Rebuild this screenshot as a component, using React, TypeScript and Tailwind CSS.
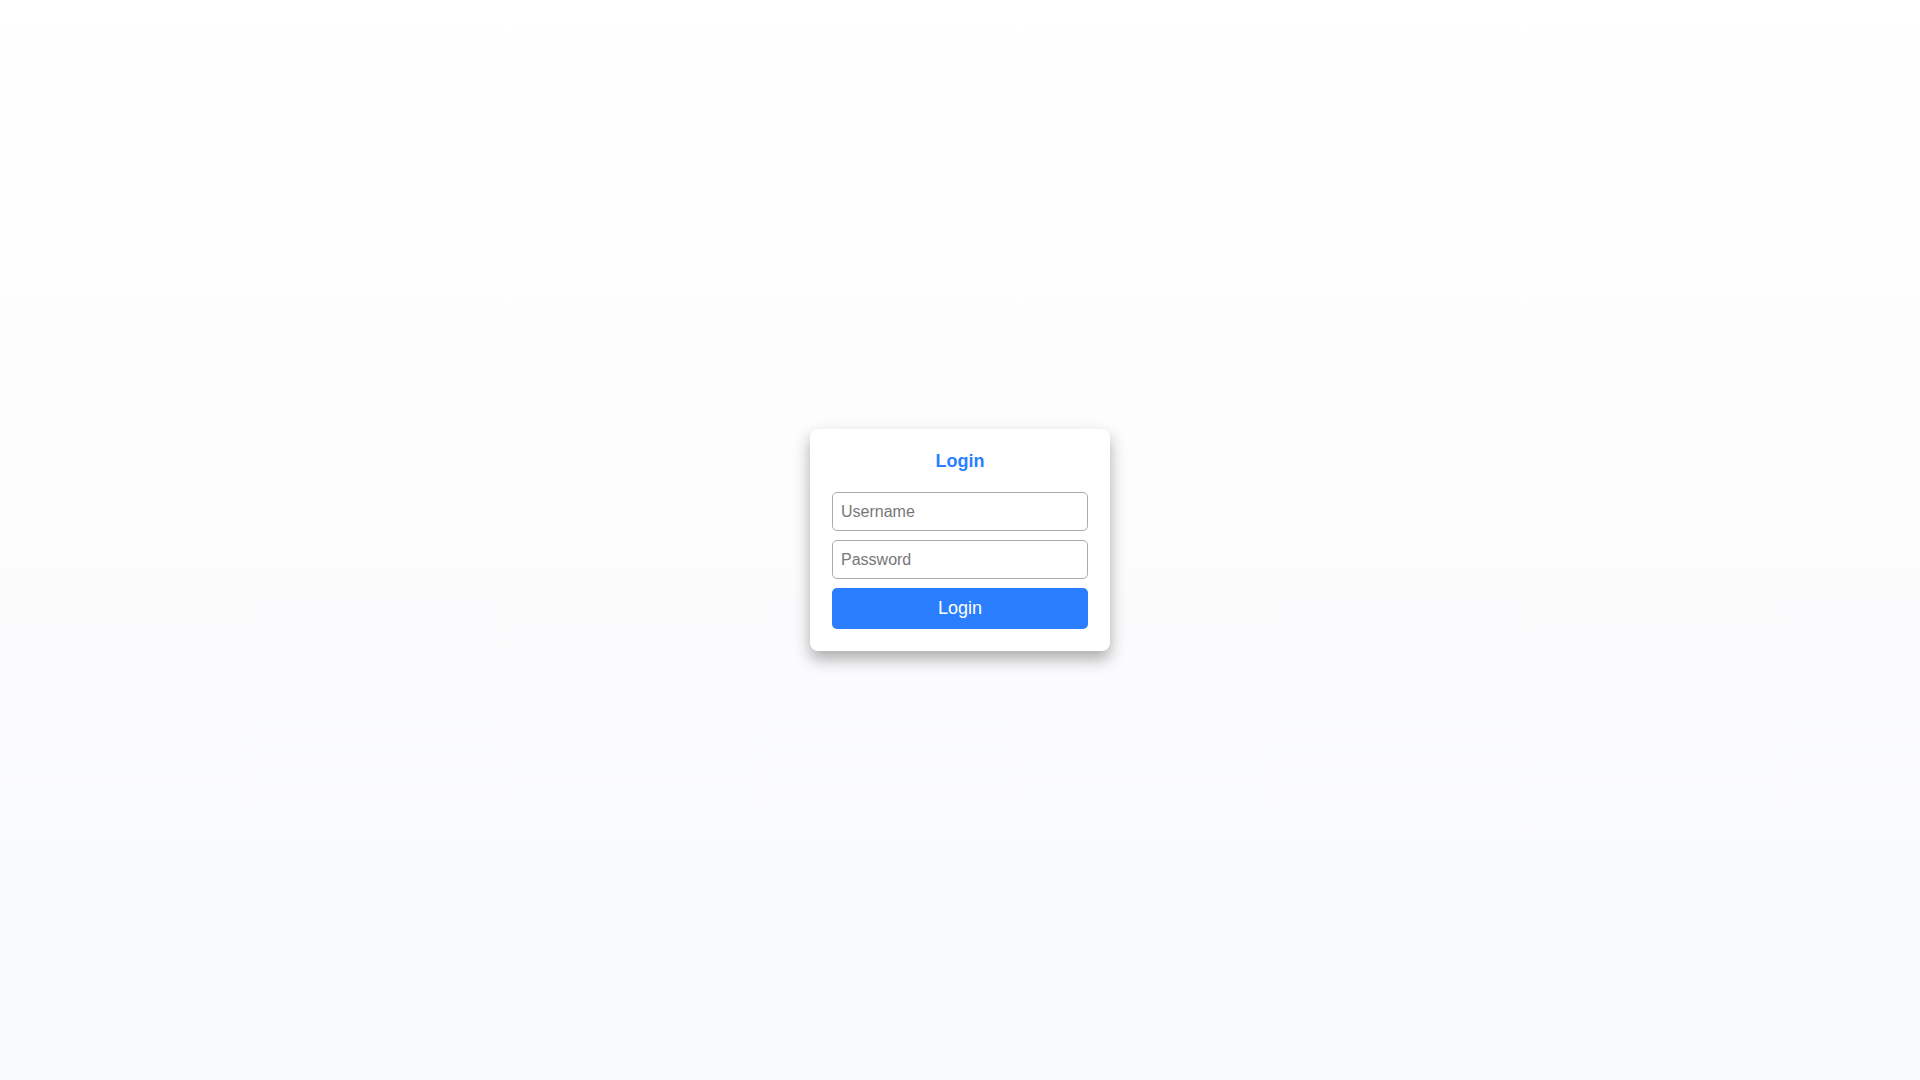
import React from "react";

export default function App() {
  return (
    <div
      className="min-h-screen w-full flex items-center justify-center bg-linear-to-b from-[#ffffff] to-[#f8f9fb]"
      style={{ fontFamily: '"Liberation Sans", Arial, sans-serif' }}
    >
      <div className="w-[300px] bg-white rounded-[8px] px-[22px] pt-[22px] pb-[22px] shadow-[0_8px_16px_rgba(0,0,0,0.32)] flex flex-col">
        <h2 className="text-[18px] leading-[21px] font-bold text-[#2b7fff] text-center mb-[20px]">
          Login
        </h2>
        <input
          type="text"
          placeholder="Username"
          className="h-[39px] w-full border border-[#aaaaaa] rounded-[5px] px-[8px] text-[16px] text-black placeholder:text-[#777777] outline-none"
        />
        <input
          type="password"
          placeholder="Password"
          className="mt-[9px] h-[39px] w-full border border-[#aaaaaa] rounded-[5px] px-[8px] text-[16px] text-black placeholder:text-[#777777] outline-none"
        />
        <button className="mt-[9px] h-[41px] w-full rounded-[5px] bg-[#2b7fff] text-white text-[18px]">
          Login
        </button>
      </div>
    </div>
  );
}
